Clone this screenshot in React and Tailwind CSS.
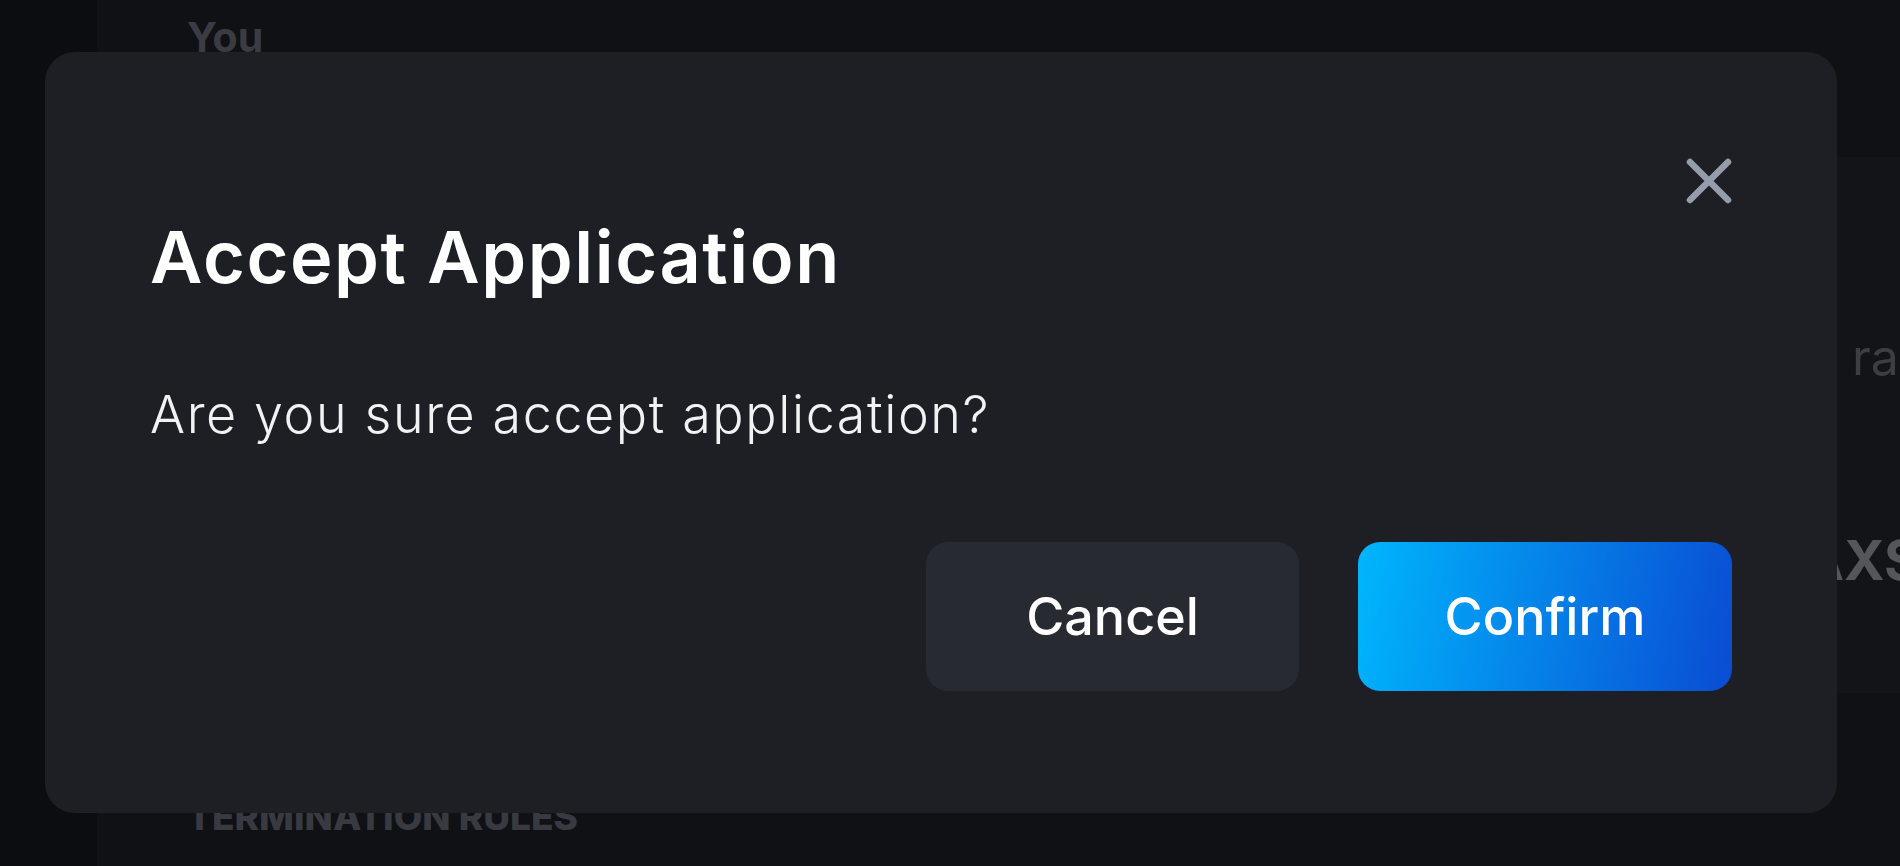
import React from 'react';

const CloseIcon = () => (
  <svg width="46" height="46" viewBox="0 0 46 46" fill="none">
    <path d="M4 4L42 42M42 4L4 42" stroke="#959cab" strokeWidth="6.5" strokeLinecap="round" />
  </svg>
);

const Backdrop = () => (
  <div className="flex h-screen w-full overflow-hidden bg-[#101115] font-['Inter',sans-serif]">
    <div className="w-[97px] shrink-0 bg-[#0c0d10]" />
    <div className="flex flex-1 flex-col pl-[90px]">
      <h2 className="mt-[14px] text-[41px] font-bold leading-[46px] text-[#3b3c43]">You</h2>
      <div className="mt-[97px] flex h-[536px]">
        <div className="flex-1" />
        <div className="flex w-[700px] flex-col overflow-hidden bg-[#131418]">
          <span className="mt-[170px] whitespace-nowrap pl-[652px] text-[50px] leading-[60px] text-[#3d3e44]">ra</span>
          <span className="mt-[143px] whitespace-nowrap pl-[603px] text-[55px] font-bold leading-[60px] text-[#55565c]">AXS</span>
        </div>
      </div>
      <h3 className="mt-[105px] text-[37px] font-extrabold uppercase leading-none text-[#393a41]">
        Termination Rules
      </h3>
    </div>
  </div>
);

const AcceptDialog = () => (
  <div className="fixed inset-0 flex pb-[53px] pl-[45px] pr-[63px] pt-[52px]">
    <div className="relative flex flex-1 flex-col rounded-[30px] bg-[#1d1f24] px-[105px] font-['Inter',sans-serif]">
      <button className="absolute right-[105px] top-[106px]">
        <CloseIcon />
      </button>
      <h1 className="mt-[165px] text-[72px] font-semibold leading-[80px] tracking-[0.022em] text-white">
        Accept Application
      </h1>
      <p className="mt-[86px] text-[52px] font-light leading-[64px] tracking-[0.031em] text-[#f2f2f4]">
        Are you sure accept application?
      </p>
      <div className="mt-[95px] flex justify-end gap-[59px]">
        <button className="h-[149px] w-[373px] rounded-[22px] bg-[#282a31] text-[52px] font-medium text-white">
          Cancel
        </button>
        <button className="h-[149px] w-[374px] rounded-[22px] bg-linear-[100deg] from-[#00b6fd] to-[#0a4cd3] text-[52px] font-medium text-white">
          Confirm
        </button>
      </div>
    </div>
  </div>
);

export default function App() {
  return (
    <div className="relative">
      <Backdrop />
      <AcceptDialog />
    </div>
  );
}
